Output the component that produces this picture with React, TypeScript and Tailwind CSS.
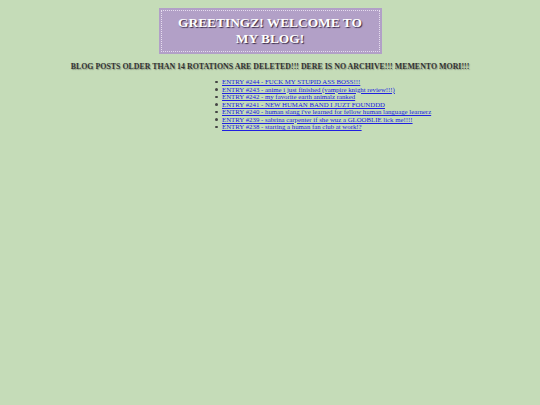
const POSTS = [
  "ENTRY #244 - FUCK MY STUPID ASS BOSS!!!",
  "ENTRY #243 - anime i just finished (vampire knight review!!!)",
  "ENTRY #242 - my favorite earth animalz ranked",
  "ENTRY #241 - NEW HUMAN BAND I JUZT FOUNDDD",
  "ENTRY #240 - human slang i've learned for fellow human language learnerz",
  "ENTRY #239 - sabrina carpenter if she wuz a GLOOBLIE lick me!!!!",
  "ENTRY #238 - starting a human fan club at work!?",
];

export default function App() {
  return (
    <div className="w-[540px] h-[405px] bg-[#c5dcb8] overflow-hidden font-['Liberation_Serif',serif]">
      <div className="flex flex-col items-center pt-[8px]">
        {/* Header */}
        <div className="w-[223px] bg-[#b2a0c7] p-[2px]">
          <div className="border border-dotted border-[#e6ddef] px-2 py-[4px] text-center text-white font-bold text-[13.4px] leading-[16px] [text-shadow:1px_1px_1px_#3a2c4a]">
            GREETINGZ! WELCOME TO
            <br />
            MY BLOG!
          </div>
        </div>

        <p className="mt-[8px] text-[7.9px] leading-[10px] font-bold text-[#333] [text-shadow:1px_1px_1px_#8a9a80]">
          BLOG POSTS OLDER THAN 14 ROTATIONS ARE DELETED!!! DERE IS NO ARCHIVE!!! MEMENTO MORI!!!
        </p>

        <ul className="mt-[6px] self-start ml-[215px] text-[6.8px] leading-[7.5px]">
          {POSTS.map((p) => (
            <li key={p} className="flex items-center">
              <span className="w-[7px] flex shrink-0">
                <span className="w-[2.5px] h-[2.5px] rounded-full bg-[#444]" />
              </span>
              <a href="#" className="text-[#2020e0] underline decoration-[#2020e0] whitespace-nowrap">
                {p}
              </a>
            </li>
          ))}
        </ul>
      </div>
    </div>
  );
}
